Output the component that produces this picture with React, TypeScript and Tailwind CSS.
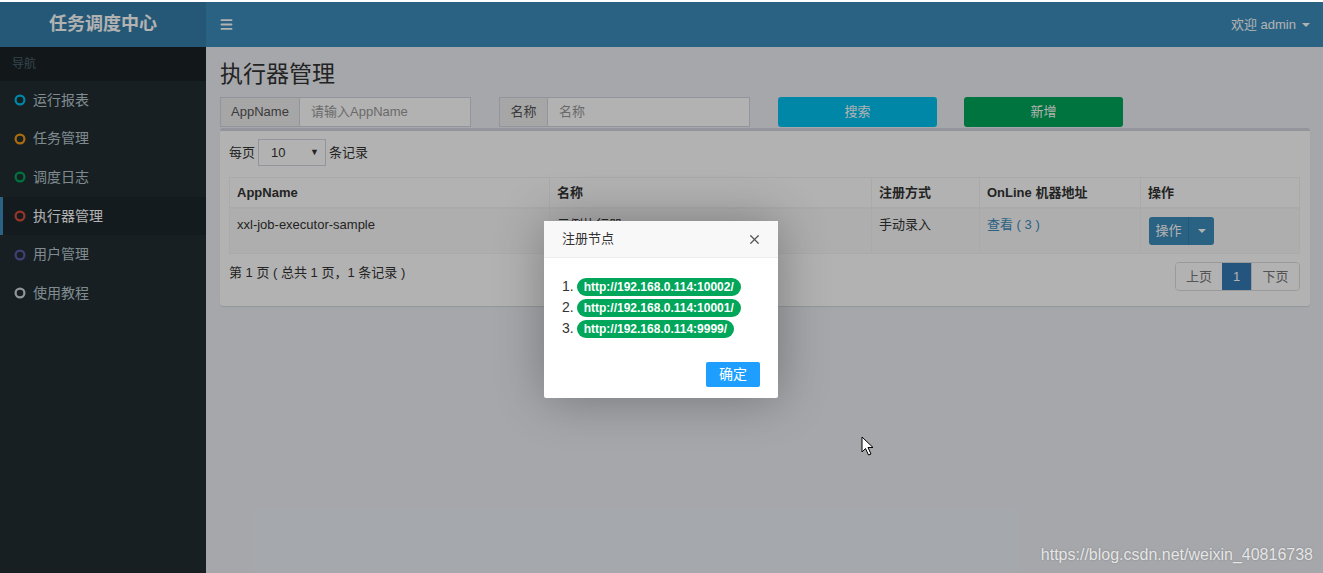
import { Menu, X } from 'lucide-react'

const font = "font-['Liberation_Sans','Noto_Sans_CJK_SC',sans-serif]"

const menu = [
  { label: '运行报表', color: '#00c0ef' },
  { label: '任务管理', color: '#f39c12' },
  { label: '调度日志', color: '#00a65a' },
  { label: '执行器管理', color: '#dd4b39', active: true },
  { label: '用户管理', color: '#605ca8' },
  { label: '使用教程', color: '#d2d6de' },
]

const nodes = ['http://192.168.0.114:10002/', 'http://192.168.0.114:10001/', 'http://192.168.0.114:9999/']

function Ring({ color }: { color: string }) {
  return (
    <svg width="12" height="12" viewBox="0 0 12 12" className="shrink-0">
      <circle cx="6" cy="6" r="4.4" fill="none" stroke={color} strokeWidth="2.2" />
    </svg>
  )
}

function Sidebar() {
  return (
    <aside className="w-[206px] shrink-0 bg-[#222d32] flex flex-col">
      <div className="h-[45px] bg-[#367fa9] flex items-center justify-center text-white text-[18px] font-bold">
        任务调度中心
      </div>
      <div className="h-[34px] bg-[#1a2226] flex items-center pl-[12px] text-[12px] text-[#4b646f]">导航</div>
      {menu.map((m) => (
        <div
          key={m.label}
          className={`h-[38.6px] flex items-center gap-[7px] pl-[11px] text-[14px] border-l-[3px] ${
            m.active ? 'bg-[#1e282c] border-[#3c8dbc] text-white' : 'border-transparent text-[#b8c7ce]'
          }`}
        >
          <Ring color={m.color} />
          <span>{m.label}</span>
        </div>
      ))}
    </aside>
  )
}

function Header() {
  return (
    <header className="h-[45px] bg-[#3c8dbc] flex items-center justify-between pl-[13px] pr-[13px] text-white">
      <Menu size={15} strokeWidth={3} />
      <div className="flex items-center gap-[6px] text-[13px]">
        <span>欢迎 admin</span>
        <span className="w-0 h-0 border-l-[4px] border-r-[4px] border-t-[4px] border-l-transparent border-r-transparent border-t-white" />
      </div>
    </header>
  )
}

function InputGroup({ addon, placeholder, addonW }: { addon: string; placeholder: string; addonW: string }) {
  return (
    <div className="w-[251px] h-[30px] flex border border-[#d2d6de] bg-white text-[13px]">
      <div className={`${addonW} shrink-0 bg-[#eee] border-r border-[#d2d6de] flex items-center justify-center text-[#555]`}>
        {addon}
      </div>
      <div className="flex-1 flex items-center pl-[11px] text-[#999]">{placeholder}</div>
    </div>
  )
}

function Content() {
  return (
    <main className="flex-1 bg-[#ecf0f5] pl-[14px] pr-[13px] pt-[14px] text-[#333]">
      <h1 className="text-[23px] leading-[26px] text-[#333]">执行器管理</h1>
      <div className="mt-[10px] flex items-center">
        <InputGroup addon="AppName" placeholder="请输入AppName" addonW="w-[79px]" />
        <div className="ml-[28px]">
          <InputGroup addon="名称" placeholder="名称" addonW="w-[48px]" />
        </div>
        <div className="ml-[28px] w-[159px] h-[30px] rounded-[3px] bg-[#00c0ef] text-white text-[13px] flex items-center justify-center">搜索</div>
        <div className="ml-[27px] w-[159px] h-[30px] rounded-[3px] bg-[#00a65a] text-white text-[13px] flex items-center justify-center">新增</div>
      </div>

      <section className="mt-[1px] w-[1090px] bg-white border-t-[3px] border-[#d2d6de] rounded-[3px] shadow-[0_1px_1px_rgba(0,0,0,0.1)] px-[9px] pt-[8px] pb-[15px] text-[13px]">
        <div className="flex items-center gap-[3px]">
          <span>每页</span>
          <div className="w-[68px] h-[27px] border border-[#d2d6de] flex items-center justify-between pl-[12px] pr-[6px]">
            <span>10</span>
            <span className="text-[9px]">▼</span>
          </div>
          <span>条记录</span>
        </div>

        <div className="mt-[11px] w-[1071px] border border-[#f4f4f4]">
          <div className="flex h-[31px] font-bold border-b-2 border-[#f4f4f4]">
            <div className="w-[320px] pl-[7px] flex items-center border-r border-[#f4f4f4]">AppName</div>
            <div className="w-[322px] pl-[7px] flex items-center border-r border-[#f4f4f4]">名称</div>
            <div className="w-[108px] pl-[7px] flex items-center border-r border-[#f4f4f4]">注册方式</div>
            <div className="w-[161px] pl-[7px] flex items-center border-r border-[#f4f4f4]">OnLine 机器地址</div>
            <div className="flex-1 pl-[7px] flex items-center">操作</div>
          </div>
          <div className="flex h-[44px] bg-[#f9f9f9]">
            <div className="w-[320px] pl-[7px] pt-[6px] border-r border-[#f4f4f4]">xxl-job-executor-sample</div>
            <div className="w-[322px] pl-[7px] pt-[6px] border-r border-[#f4f4f4]">示例执行器</div>
            <div className="w-[108px] pl-[7px] pt-[6px] border-r border-[#f4f4f4]">手动录入</div>
            <div className="w-[161px] pl-[7px] pt-[6px] border-r border-[#f4f4f4] text-[#3c8dbc]">查看 ( 3 )</div>
            <div className="flex-1 pl-[8px] pt-[8px]">
              <div className="inline-flex h-[28px] rounded-[3px] bg-[#3c8dbc] text-white">
                <span className="w-[40px] flex items-center justify-center border-r border-[#367fa9]">操作</span>
                <span className="w-[25px] flex items-center justify-center">
                  <span className="w-0 h-0 border-l-[4px] border-r-[4px] border-t-[4px] border-l-transparent border-r-transparent border-t-white" />
                </span>
              </div>
            </div>
          </div>
        </div>

        <div className="mt-[8px] flex items-start justify-between w-[1071px]">
          <span className="pt-[1px]">第 1 页 ( 总共 1 页，1 条记录 )</span>
          <div className="flex h-[29px] rounded-[4px] border border-[#ddd] overflow-hidden">
            <span className="w-[46px] flex items-center justify-center text-[#777] bg-white">上页</span>
            <span className="w-[29px] flex items-center justify-center bg-[#337ab7] text-white">1</span>
            <span className="w-[48px] flex items-center justify-center text-[#777] border-l border-[#ddd] bg-white">下页</span>
          </div>
        </div>
      </section>
    </main>
  )
}

function Modal() {
  return (
    <div className="absolute left-[544px] top-[219px] w-[234px] bg-white rounded-[2px] shadow-[1px_1px_50px_rgba(0,0,0,0.3)]">
      <div className="h-[37px] bg-[#f8f8f8] border-b border-[#eee] flex items-center justify-between pl-[18px] pr-[16px] text-[13px] text-[#333]">
        <span>注册节点</span>
        <X size={15} strokeWidth={2} className="text-[#555]" />
      </div>
      <ol className="pt-[18px] pl-[18px] text-[14px] text-[#333]">
        {nodes.map((n, i) => (
          <li key={n} className="h-[21px] flex items-center gap-[3px]">
            <span>{i + 1}.</span>
            <span className="h-[18px] px-[7px] rounded-[10px] bg-[#00a65a] text-white text-[12px] font-bold flex items-center">{n}</span>
          </li>
        ))}
      </ol>
      <div className="flex justify-end pr-[18px] pt-[23px] pb-[11px]">
        <span className="w-[54px] h-[25px] bg-[#1e9fff] text-white text-[14px] rounded-[2px] flex items-center justify-center">确定</span>
      </div>
    </div>
  )
}

export default function App() {
  return (
    <div className={`${font} w-[1323px] h-[573px] overflow-hidden flex flex-col bg-white`}>
      <div className="h-[2px] bg-white shrink-0" />
      <div className="relative flex-1 flex">
        <Sidebar />
        <div className="flex-1 flex flex-col">
          <Header />
          <Content />
        </div>
        <div className="absolute inset-0 bg-black/30" />
        <Modal />
        <svg className="absolute left-[861px] top-[434px]" width="14" height="21" viewBox="0 0 14 21">
          <path d="M1 1 L1 16 L4.5 12.5 L7.5 19 L10 18 L7 11.5 L12 11.5 Z" fill="white" stroke="black" strokeWidth="1" strokeLinejoin="round" />
        </svg>
        <div className="absolute right-[10px] bottom-[6px] text-[16px] text-[#e6e6e6] [text-shadow:0_0_2px_rgba(0,0,0,0.25)]">
          https://blog.csdn.net/weixin_40816738
        </div>
      </div>
    </div>
  )
}
